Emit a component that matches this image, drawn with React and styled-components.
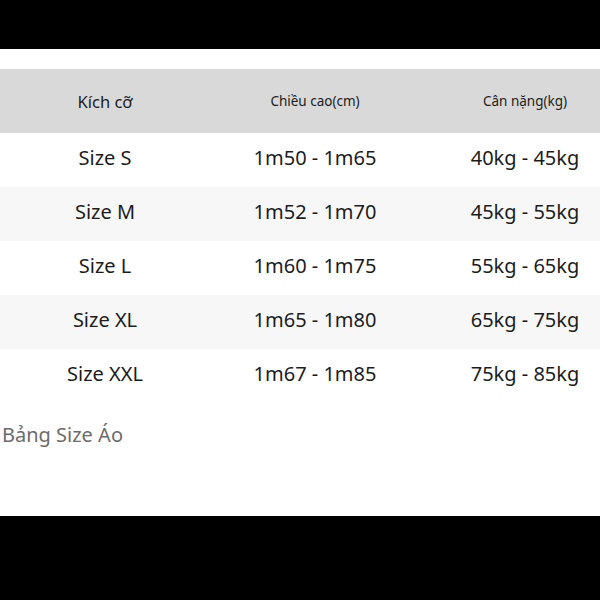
import React from 'react';
import styled, { createGlobalStyle } from 'styled-components';

const GlobalStyle = createGlobalStyle`
  html, body {
    margin: 0;
    padding: 0;
    background: #000;
  }
  body {
    font-family: "Noto Sans", "Open Sans", sans-serif;
  }
`;

const Frame = styled.div`
  width: 600px;
  height: 600px;
  display: flex;
  flex-direction: column;
  background: #000;
  overflow: hidden;
`;

const Sheet = styled.div`
  margin-top: 49px;
  height: 467px;
  background: #fff;
  padding-top: 20px;
  box-sizing: border-box;
`;

const Row = styled.div`
  display: grid;
  grid-template-columns: 210px 210px 210px;
  align-items: center;
  box-sizing: border-box;
  height: ${(p) => (p.head ? 64 : 54)}px;
  padding-bottom: ${(p) => (p.head ? 0 : 5)}px;
  background: ${(p) => (p.head ? '#d9d9d9' : p.shade ? '#f7f7f7' : '#fff')};
`;

const Cell = styled.div`
  text-align: center;
  color: #1c1c1c;
  font-size: ${(p) => (p.head ? (p.small ? 13.5 : 16.5) : 20)}px;
  white-space: nowrap;
`;

const Caption = styled.div`
  margin-top: 18px;
  padding-left: 2px;
  font-size: 20px;
  color: #6b6b6b;
`;

const rows = [
  ['Size S', '1m50 - 1m65', '40kg - 45kg'],
  ['Size M', '1m52 - 1m70', '45kg - 55kg'],
  ['Size L', '1m60 - 1m75', '55kg - 65kg'],
  ['Size XL', '1m65 - 1m80', '65kg - 75kg'],
  ['Size XXL', '1m67 - 1m85', '75kg - 85kg'],
];

export default function App() {
  return (
    <Frame>
      <GlobalStyle />
      <Sheet>
        <Row head>
          <Cell head>Kích cỡ</Cell>
          <Cell head small>Chiều cao(cm)</Cell>
          <Cell head small>Cân nặng(kg)</Cell>
        </Row>
        {rows.map((r, i) => (
          <Row key={r[0]} shade={i % 2 === 1}>
            {r.map((c) => (
              <Cell key={c}>{c}</Cell>
            ))}
          </Row>
        ))}
        <Caption>Bảng Size Áo</Caption>
      </Sheet>
    </Frame>
  );
}
